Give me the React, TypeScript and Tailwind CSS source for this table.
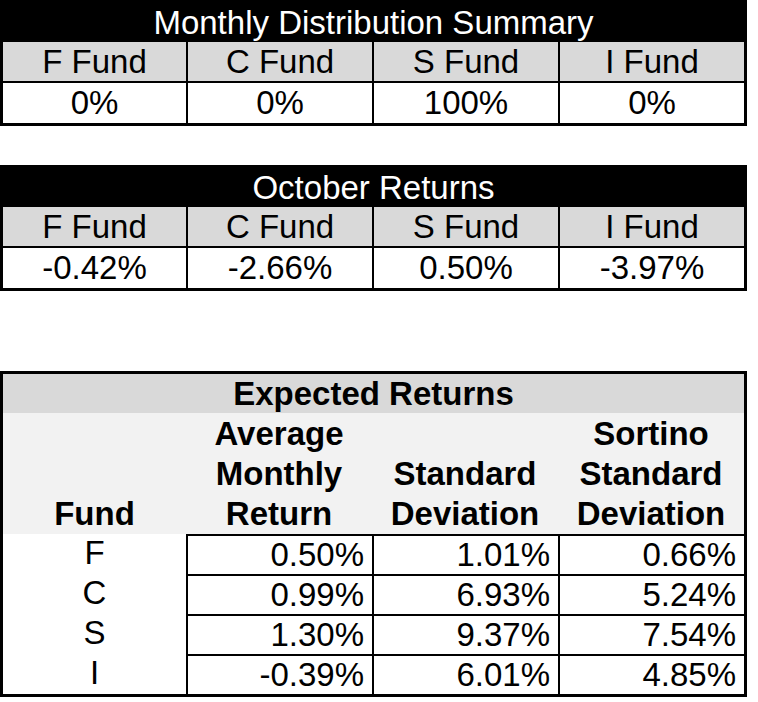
const FUNDS = ['F Fund', 'C Fund', 'S Fund', 'I Fund']
const COLS = 'grid grid-cols-[183px_186px_186px_186px]'

const EXPECTED = [
  { fund: 'F', avg: '0.50%', sd: '1.01%', sortino: '0.66%' },
  { fund: 'C', avg: '0.99%', sd: '6.93%', sortino: '5.24%' },
  { fund: 'S', avg: '1.30%', sd: '9.37%', sortino: '7.54%' },
  { fund: 'I', avg: '-0.39%', sd: '6.01%', sortino: '4.85%' },
]

function FundTable({ title, values, className }: { title: string; values: string[]; className?: string }) {
  return (
    <div className={`w-[747px] border-[3px] border-black ${className ?? ''}`}>
      {/* black title band */}
      <div className="h-[39px] bg-black text-center text-[33px] leading-[39px] text-white">{title}</div>
      <div className={`${COLS} h-[39px] bg-[#d9d9d9]`}>
        {FUNDS.map((f, i) => (
          <div key={f} className={`text-center text-[33px] leading-[40px] ${i > 0 ? 'border-l-2 border-black' : ''}`}>
            {f}
          </div>
        ))}
      </div>
      <div className={`${COLS} h-[42px] border-t-2 border-black bg-white`}>
        {values.map((v, i) => (
          <div key={i} className={`text-center text-[33px] leading-[40px] ${i > 0 ? 'border-l-2 border-black' : ''}`}>
            {v}
          </div>
        ))}
      </div>
    </div>
  )
}

function ExpectedReturns() {
  return (
    <div className="mt-[80px] w-[747px] border-[3px] border-black">
      <div className="h-[39px] bg-[#d9d9d9] text-center text-[33px] font-bold leading-[39px]">Expected Returns</div>

      {/* header */}
      <div className={`${COLS} h-[121px] bg-[#f2f2f2] text-[33px] font-bold leading-[40px]`}>
        <div className="flex flex-col items-center justify-end">Fund</div>
        <div className="flex flex-col items-center justify-end">
          <span>Average</span>
          <span>Monthly</span>
          <span>Return</span>
        </div>
        <div className="flex flex-col items-center justify-end">
          <span>Standard</span>
          <span>Deviation</span>
        </div>
        <div className="flex flex-col items-center justify-end">
          <span>Sortino</span>
          <span>Standard</span>
          <span>Deviation</span>
        </div>
      </div>

      {/* rows */}
      {EXPECTED.map(r => (
        <div key={r.fund} className={`${COLS} h-[40px] bg-white text-[33px] leading-[38px]`}>
          <div className="text-center">{r.fund}</div>
          {[r.avg, r.sd, r.sortino].map((v, i) => (
            <div key={i} className="border-l-2 border-t-2 border-black pr-2 text-right">
              {v}
            </div>
          ))}
        </div>
      ))}
    </div>
  )
}

export default function App() {
  return (
    <div className="h-[702px] w-[758px] overflow-hidden bg-white [font-family:'Liberation_Sans',Arial,sans-serif] text-black">
      <FundTable title="Monthly Distribution Summary" values={['0%', '0%', '100%', '0%']} />
      <FundTable title="October Returns" values={['-0.42%', '-2.66%', '0.50%', '-3.97%']} className="mt-[39px]" />
      <ExpectedReturns />
    </div>
  )
}
